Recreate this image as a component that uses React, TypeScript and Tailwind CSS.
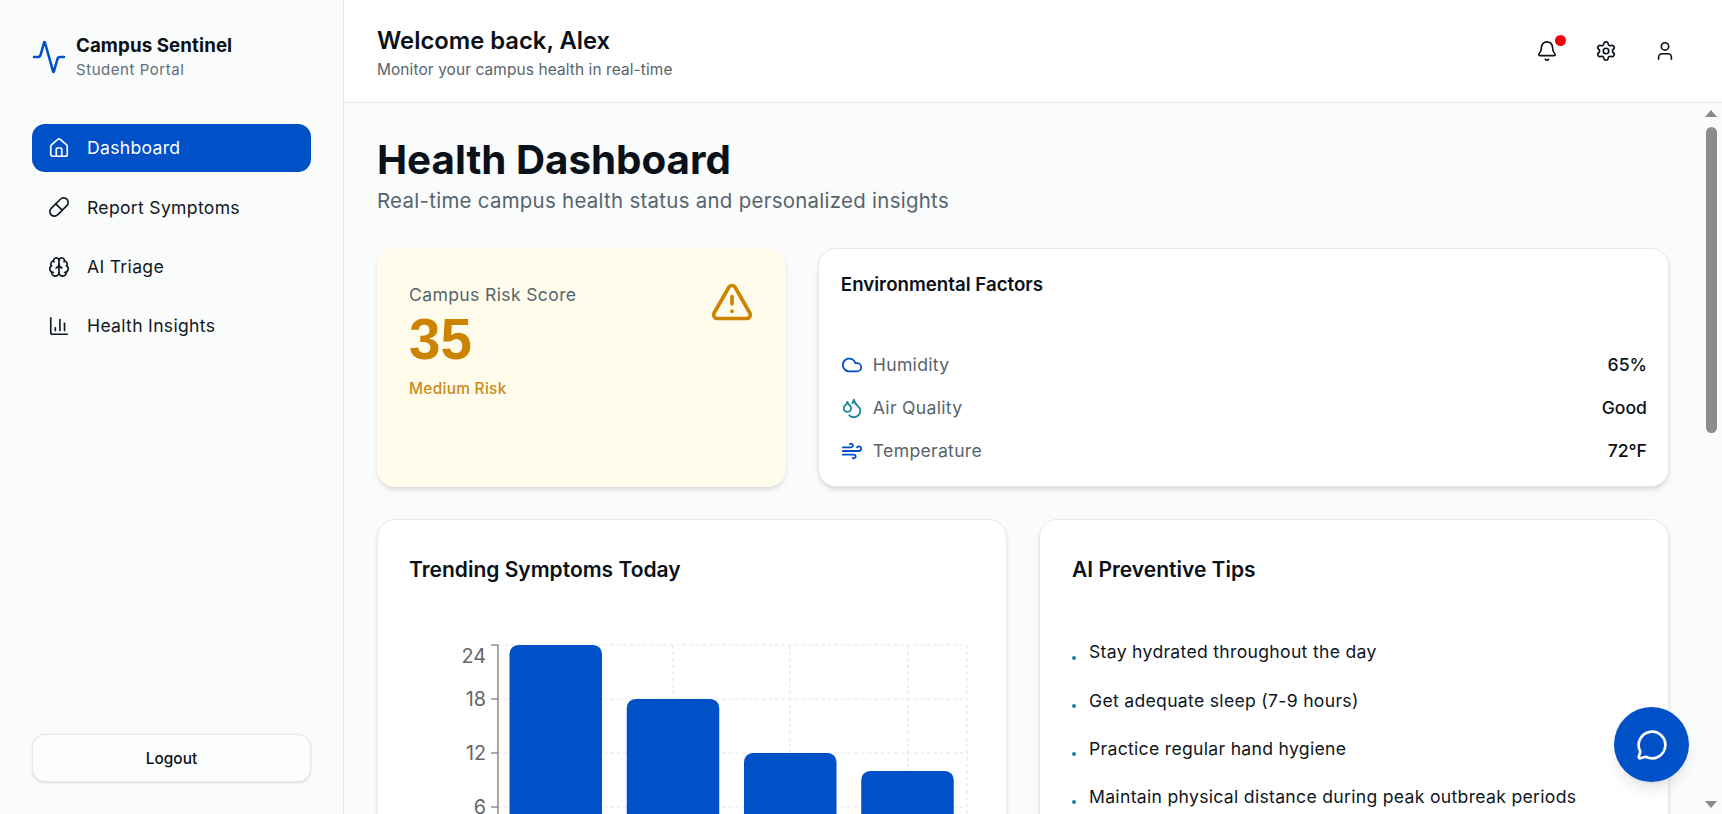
import { Home, Pill, Brain, BarChart3, Activity, Bell, Settings, User, TriangleAlert, Cloud, Droplets, Wind, MessageCircle } from "lucide-react";

const nav = [
  { label: "Dashboard", Icon: Home, active: true },
  { label: "Report Symptoms", Icon: Pill },
  { label: "AI Triage", Icon: Brain },
  { label: "Health Insights", Icon: BarChart3 },
];

const factors = [
  { label: "Humidity", value: "65%", Icon: Cloud, color: "text-[#0050c8]" },
  { label: "Air Quality", value: "Good", Icon: Droplets, color: "text-[#17859a]" },
  { label: "Temperature", value: "72°F", Icon: Wind, color: "text-[#0050c8]" },
];

const tips = [
  "Stay hydrated throughout the day",
  "Get adequate sleep (7-9 hours)",
  "Practice regular hand hygiene",
  "Maintain physical distance during peak outbreak periods",
];

function Chart() {
  const left = 88;
  const top = 5;
  const right = 557;
  const ys = [0, 54, 108, 162, 216];
  const labels = [
    { t: "24", y: 0, dy: 18 },
    { t: "18", y: 54, dy: 7 },
    { t: "12", y: 108, dy: 7 },
    { t: "6", y: 162, dy: 7 },
  ];
  const bars = [
    { x: 99.5, v: 24 },
    { x: 216.75, v: 18 },
    { x: 334, v: 12 },
    { x: 451.25, v: 10 },
  ];
  return (
    <svg width="564" height="240" viewBox="0 0 564 240" className="block">
      <g stroke="#dfe3e7" strokeWidth="1.1" strokeDasharray="3.3 3.3" fill="none">
        {ys.map((y) => (
          <line key={y} x1={left} x2={right} y1={top + y} y2={top + y} />
        ))}
        {[145.6, 263, 380, 498, 557].map((x) => (
          <line key={x} x1={x} x2={x} y1={top} y2={top + 216} />
        ))}
      </g>
      {bars.map((b) => {
        const y = top + (24 - b.v) * 9;
        return (
          <path
            key={b.x}
            fill="#0050c8"
            d={`M${b.x} ${top + 216}V${y + 8.8}a8.8 8.8 0 0 1 8.8 -8.8H${b.x + 83.7}a8.8 8.8 0 0 1 8.8 8.8V${top + 216}Z`}
          />
        );
      })}
      <g stroke="#666" strokeWidth="1.1" fill="none">
        <line x1={left} x2={left} y1={top} y2={top + 216} />
        {ys.map((y) => (
          <line key={y} x1={left - 7} x2={left} y1={top + y} y2={top + y} />
        ))}
      </g>
      <g fill="#666" fontSize="19.8" textAnchor="end" fontFamily="Inter, sans-serif">
        {labels.map(({ t, y, dy }) => (
          <text key={t} x={left - 12} y={top + y + dy}>
            {t}
          </text>
        ))}
      </g>
    </svg>
  );
}

export default function App() {
  return (
    <div className="flex h-screen overflow-hidden bg-[#fafcfc] font-['Inter',sans-serif] text-[#0b1118]">
      <aside className="flex w-[344px] shrink-0 flex-col border-r border-[#e5e9ec] bg-[#fafcfc] px-[32px] pb-[32px] pt-[32px]">
        <div className="flex items-center gap-[9px]">
          <Activity size={36} strokeWidth={1.7} className="text-[#0050c8] -ml-[1px]" />
          <div>
            <div className="text-[18.7px] font-bold leading-[27px] tracking-[0.1px]">Campus Sentinel</div>
            <div className="text-[15px] leading-[22px] tracking-[0.55px] text-[#626e78]">Student Portal</div>
          </div>
        </div>
        <nav className="mt-[43px] flex flex-col gap-[11.4px]">
          {nav.map(({ label, Icon, active }) => (
            <div
              key={label}
              className={`flex h-[48px] items-center gap-[17px] rounded-[13px] px-[16px] text-[17.6px] tracking-[0.3px] ${
                active ? "bg-[#0050c8] text-white" : "text-[#11181f]"
              }`}
            >
              <Icon size={22} strokeWidth={1.8} />
              <span className="pt-[1px]">{label}</span>
            </div>
          ))}
        </nav>
        <button className="mt-auto h-[48px] rounded-[13px] border border-[#e5e9ec] bg-[#fcfdfd] pt-[1px] text-[15.4px] font-medium shadow-sm">
          Logout
        </button>
      </aside>

      <div className="flex min-w-0 flex-1 flex-col">
        <header className="flex h-[103px] shrink-0 items-center justify-between border-b border-[#e5e9ec] bg-white pl-[33px] pr-[46px]">
          <div className="pt-[3px]">
            <div className="text-[23.8px] font-semibold leading-[33px]">Welcome back, Alex</div>
            <div className="mt-[2px] text-[15.4px] leading-[22px] tracking-[0.12px] text-[#56646e]">Monitor your campus health in real-time</div>
          </div>
          <div className="flex items-center gap-[37px] text-[#0b1118]">
            <div className="relative">
              <Bell size={22} strokeWidth={1.8} />
              <span className="absolute -right-[7.5px] -top-[5.5px] h-[11px] w-[11px] rounded-full bg-[#f00008]" />
            </div>
            <Settings size={22} strokeWidth={1.8} />
            <User size={22} strokeWidth={1.8} />
          </div>
        </header>

        <div className="flex min-h-0 flex-1">
          <main className="min-w-0 flex-1 overflow-hidden pl-[33px] pr-[32px] pt-[33px]">
            <h1 className="text-[40.3px] font-bold leading-[48px]">Health Dashboard</h1>
            <p className="mt-[2px] text-[20.4px] leading-[29px] tracking-[0.3px] text-[#56646e]">
              Real-time campus health status and personalized insights
            </p>

            <div className="mt-[33px] grid grid-cols-3 gap-[32px]">
              <section className="flex h-[239px] items-start justify-between rounded-[18px] bg-[#fffceb] px-[32px] pb-[32px] pt-[34px] shadow-md">
                <div>
                  <div className="text-[17.6px] leading-[26px] tracking-[0.35px] text-[#56646e]">Campus Risk Score</div>
                  <div className="mt-[5px] font-['Liberation_Sans',sans-serif] text-[56.5px] font-bold leading-[53px] text-[#cc8400]">35</div>
                  <div className="mt-[12px] text-[15.4px] font-medium leading-[22px] tracking-[0.3px] text-[#cc8a1a]">Medium Risk</div>
                </div>
                <TriangleAlert size={44} strokeWidth={2} className="text-[#cc8400] -mt-[2px]" />
              </section>

              <section className="col-span-2 flex h-[239px] flex-col rounded-[18px] border border-[#e5e9ec] bg-white pb-[21px] pl-[21.5px] pr-[21px] pt-[23px] shadow-md">
                <h2 className="text-[18.7px] font-semibold leading-[26px]">Environmental Factors</h2>
                <div className="mt-[53px] flex flex-col gap-[15px]">
                  {factors.map(({ label, value, Icon, color }) => (
                    <div key={label} className="flex h-[28px] items-center justify-between">
                      <div className="flex items-center gap-[10px]">
                        <Icon size={22} className={color} />
                        <span className="text-[17.6px] tracking-[0.3px] text-[#56646e]">{label}</span>
                      </div>
                      <span className="text-[17.6px] font-medium">{value}</span>
                    </div>
                  ))}
                </div>
              </section>
            </div>

            <div className="mt-[32px] grid grid-cols-2 gap-[32px]">
              <section className="h-[500px] rounded-[18px] border border-[#e5e9ec] bg-white pl-[31px] pr-[32px] pt-[35px] shadow-md">
                <h2 className="text-[21px] font-semibold leading-[30px]">Trending Symptoms Today</h2>
                <div className="ml-[1px] mt-[55px]">
                  <Chart />
                </div>
              </section>
              <section className="h-[500px] rounded-[18px] border border-[#e5e9ec] bg-white px-[32px] pt-[35px] shadow-md">
                <h2 className="text-[21px] font-semibold leading-[30px]">AI Preventive Tips</h2>
                <ul className="mt-[53.5px] flex flex-col gap-[20.3px]">
                  {tips.map((t) => (
                    <li key={t} className="flex h-[28px] items-center gap-[13px] text-[17.6px] tracking-[0.3px] text-[#0f161d]">
                      <span className="mt-[10px] h-[4px] w-[4px] shrink-0 rounded-full bg-[#17859a]" />
                      <span>{t}</span>
                    </li>
                  ))}
                </ul>
              </section>
            </div>
          </main>

          <div className="flex w-[21px] shrink-0 flex-col items-center pr-[1px] pt-[7px]">
            <div className="h-0 w-0 border-x-[6px] border-b-[7px] border-x-transparent border-b-[#8c8c8c]" />
            <div className="mt-[10px] h-[306px] w-[11px] rounded-full bg-[#8c8c8c]" />
            <div className="mb-[6px] mt-auto h-0 w-0 border-x-[6px] border-t-[7px] border-x-transparent border-t-[#8c8c8c]" />
          </div>
        </div>
      </div>

      <button className="fixed bottom-[32px] right-[33px] flex h-[75px] w-[75px] items-center justify-center rounded-full bg-[#0050c8] text-white shadow-lg">
        <MessageCircle size={32} strokeWidth={2} />
      </button>
    </div>
  );
}
